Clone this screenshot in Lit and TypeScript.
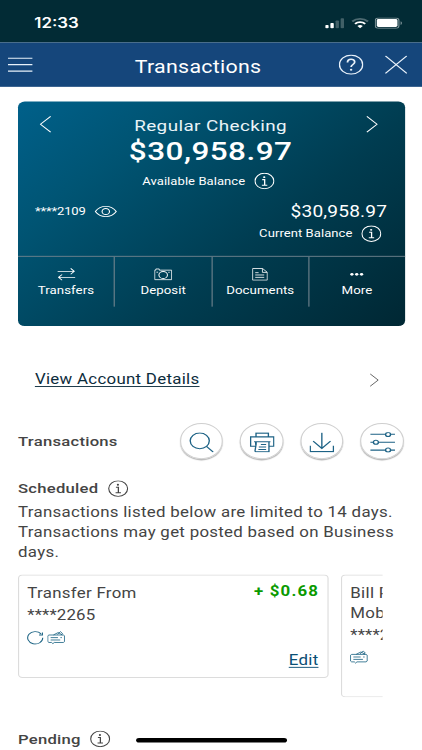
import { LitElement, html, css, svg } from "lit";
import { customElement, property } from "lit/decorators.js";

const icons: Record<string, unknown> = {
  info: svg`<svg viewBox="0 0 18 18" width="18" height="18"><circle cx="9" cy="9" r="8.4"/><circle cx="8.8" cy="4.8" r="1" fill="currentColor" stroke="none"/><path d="M7 7.5h2.2v5.9M6.7 13.5h4.8" stroke-width="1.15"/></svg>`,
  eye: svg`<svg viewBox="0 0 20 14" width="20" height="14"><path d="M.7 7C5.4-.4 14.6-.4 19.3 7 14.6 14.4 5.4 14.4.7 7z"/><circle cx="10" cy="7" r="3.3"/></svg>`,
  left: svg`<svg viewBox="0 0 11 19" width="11" height="19"><path d="M10 1L1 9.5 10 18"/></svg>`,
  right: svg`<svg viewBox="0 0 11 19" width="11" height="19"><path d="M1 1l9 8.5L1 18"/></svg>`,
  menu: svg`<svg viewBox="0 0 22 18" width="22" height="18"><path d="M0 2h22M0 9h22M0 16h22" stroke-width="1.2"/></svg>`,
  help: svg`<svg viewBox="0 0 22 22" width="22" height="22"><circle cx="11" cy="11" r="10.3" stroke-width="1.2"/><path d="M7.8 8.6C7.8 4 14.2 4 14.2 8.2c0 2.7-3.2 2.6-3.2 5.4" stroke-width="1.6"/><circle cx="11" cy="16.4" r="1.1" fill="currentColor" stroke="none"/></svg>`,
  close: svg`<svg viewBox="0 0 20 20" width="20" height="20"><path d="M.5.5l19 19M19.5.5l-19 19" stroke-width="1.2"/></svg>`,
  transfers: svg`<svg viewBox="0 0 16 14" width="16" height="14"><path d="M0 3.8h15M11.8.6L15 3.8l-3.2 3.1M16 10.3H1M4.2 7.2L1 10.3l3.2 3.2" stroke-width=".9"/></svg>`,
  deposit: svg`<svg viewBox="0 0 16 14" width="16" height="14"><path d="M.5 2.5h1V1.2h3v1.3h11v10.3H.5zM12.5 4.8h1.3M2 4.7h1.5" stroke-width=".8"/><circle cx="8" cy="7.7" r="3.8" stroke-width=".9"/></svg>`,
  documents: svg`<svg viewBox="0 0 14 14" width="14" height="14"><path d="M.5.7h8.8l4.2 4.1v8.5H.5zM9.2.8v4.1h4.2M2.8 5.2h3M2.8 7.7h8M2.8 10.3h8" stroke-width=".8"/></svg>`,
  more: svg`<svg viewBox="0 0 14 14" width="14" height="14"><g fill="currentColor" stroke="none"><circle cx="2.7" cy="7" r="1.45"/><circle cx="7" cy="7" r="1.45"/><circle cx="11.3" cy="7" r="1.45"/></g></svg>`,
  search: svg`<svg viewBox="0 0 22 22" width="22" height="22"><circle cx="9.5" cy="9.3" r="8.5" stroke-width="1.2"/><path d="M15.5 15.3l6 6.2" stroke-width="1.2"/></svg>`,
  print: svg`<svg viewBox="0 0 22 22" width="22" height="22"><path d="M5.5 5V.9h11V5M5 15.2H.7V5h20.6v10.2H17M3.8 10.2h14.5M5.2 10.2v3.4M17 10.2v10.9H5.2l-.6-.8 1-7.500v-2.5M9.8 13.2h4.7M8 16h6.5M7.6 18.7h6.9" stroke-width="1.2"/></svg>`,
  download: svg`<svg viewBox="0 0 22 22" width="22" height="22"><path d="M11 .5v17M3.3 9.5l7.700 8 7.700-8M.7 14.5v6.5h20.600v-6.5" stroke-width="1.2"/></svg>`,
  filter: svg`<svg viewBox="0 0 22 22" width="22" height="22"><path d="M0 2.2h13.5M18.2 2.2H22M0 10.800h2.700M7.400 10.800H22M0 19.300h13.500M18.200 19.300H22" stroke-width="1.2"/><circle cx="15.85" cy="2.400" r="2.2" stroke-width="1.2"/><circle cx="5.05" cy="10.800" r="2.2" stroke-width="1.2"/><circle cx="15.85" cy="19.300" r="2.2" stroke-width="1.2"/></svg>`,
  repeat: svg`<svg viewBox="0 0 15 15" width="15" height="15"><path d="M14 7.5A6.7 6.7 0 1 1 12.5 3.3M13.7 1.8v2.7h-3" stroke-width=".95"/></svg>`,
  check: svg`<svg viewBox="0 0 16 15" width="16" height="15"><path d="M1.5 4.5h12.8l1 .8v6.4l-1 .9H6.2l-1.2 1.3-1.100-1.3H1.5l-1-.9V5.300zM5.500 4.400l4.300-2.600 3.500 2.600M9 3.900l2.800-3.100 1.800 2.300-1.300 1.100M3 7.300h6.500M3 9.900h8.500M11.700 7.300H13" stroke-width=".8"/></svg>`,
};
const icon = (name: string) => icons[name];

const shared = css`
  svg {
    display: block;
    fill: none;
    stroke: currentColor;
    stroke-width: 1;
    flex: none;
  }
`;

@customElement("status-bar")
class StatusBar extends LitElement {
  static styles = [
    shared,
    css`
      :host {
        display: flex;
        height: 45.5px;
        padding: 3.5px 16.7px 0 30.5px;
        box-sizing: border-box;
        align-items: center;
        justify-content: space-between;
        background: #022b35;
        color: #fff;
      }
      .time {
        font: 600 15px Inter, sans-serif;
      }
      .signals {
        display: flex;
        align-items: center;
        gap: 5.5px;
      }
    `,
  ];
  render() {
    return html`<span class="time">12:33</span>
      <div class="signals">
        <svg viewBox="0 0 17 12" width="17" height="12">
          <g fill="#fff" stroke="none">
            <rect x="0" y="8" width="3" height="3.6" rx=".8" />
            <rect x="4.6" y="6" width="3" height="5.6" rx=".8" />
            <rect x="9.2" y="3.3" width="3" height="8.3" rx=".8" opacity=".25" />
            <rect x="13.7" y=".8" width="3" height="10.8" rx=".8" opacity=".25" />
          </g>
        </svg>
        <svg viewBox="0 0 16 12" width="16" height="12">
          <path d="M1 4.3a10 10 0 0 1 14 0" stroke-width="2" opacity=".3" />
          <path d="M3.5 6.8a6.5 6.5 0 0 1 9 0" stroke-width="2" />
          <path d="M5.6 9.2a3.4 3.4 0 0 1 4.8 0L8 11.7z" fill="#fff" stroke="none" />
        </svg>
        <svg viewBox="0 0 25 12" width="25" height="12">
          <rect x=".5" y=".5" width="21" height="11" rx="3" opacity=".5" />
          <rect x="1.8" y="1.7" width="18.4" height="8.6" rx="1.6" fill="#fff" stroke="none" />
          <path d="M23 4v4c1.6-.6 1.6-3.4 0-4z" fill="#fff" stroke="none" opacity=".5" />
        </svg>
      </div>`;
  }
}

@customElement("account-card")
class AccountCard extends LitElement {
  static styles = [
    shared,
    css`
      :host {
        display: flex;
        flex-direction: column;
        width: 343.5px;
        height: 243px;
        border-radius: 6px;
        background: linear-gradient(135deg, #00608a 0%, #005473 25%, #003c50 62%, #002733 100%);
        color: #fff;
      }
      .top {
        display: grid;
        grid-template-columns: 11px 1fr 11px;
        padding: 15.5px 24px 0 18.8px;
        height: 97px;
        box-sizing: border-box;
      }
      .headline {
        display: flex;
        flex-direction: column;
        align-items: center;
        padding-left: 4px;
        margin-top: -0.5px;
      }
      .name {
        font-size: 16.8px;
        line-height: 22px;
        letter-spacing: 0.36px;
        color: #eaf4f8;
      }
      .total {
        font-size: 28px;
        font-weight: 500;
        line-height: 36px;
        letter-spacing: 0.4px;
        margin-top: -0.5px;
      }
      .line {
        display: flex;
        align-items: center;
        gap: 8px;
        font-size: 11.6px;
        letter-spacing: 0.05px;
      }
      .available {
        margin: 5px 4px 0 0;
        line-height: 18px;
      }
      .mid {
        display: flex;
        justify-content: space-between;
        padding: 10.5px 15.5px 0 15px;
        height: 70.5px;
        box-sizing: border-box;
      }
      .mask {
        height: 24px;
        gap: 7.5px;
        letter-spacing: -0.1px;
      }
      .right {
        display: flex;
        flex-direction: column;
        align-items: flex-end;
      }
      .current {
        font-size: 17px;
        line-height: 24px;
        letter-spacing: 0.15px;
      }
      .sub {
        margin: 3.3px 4.8px 0 0;
      }
      .actions {
        display: grid;
        grid-template-columns: repeat(3, 86.3px) 1fr;
        border-top: 1px solid #6f838d;
      }
      .action {
        display: flex;
        flex-direction: column;
        align-items: center;
        gap: 3px;
        height: 54px;
        padding-top: 11.5px;
        box-sizing: border-box;
        font-size: 11.8px;
        line-height: 15px;
        letter-spacing: 0.03px;
        border-right: 1px solid #6f838d;
      }
      .action:last-child {
        border: 0;
      }
    `,
  ];
  render() {
    return html`<div class="top">
        ${icon("left")}
        <div class="headline">
          <div class="name">Regular Checking</div>
          <div class="total">$30,958.97</div>
          <div class="line available">Available Balance ${icon("info")}</div>
        </div>
        ${icon("right")}
      </div>
      <div class="mid">
        <div class="line mask">****2109 ${icon("eye")}</div>
        <div class="right">
          <div class="current">$30,958.97</div>
          <div class="line sub">Current Balance ${icon("info")}</div>
        </div>
      </div>
      <div class="actions">
        ${["Transfers", "Deposit", "Documents", "More"].map(
          (label) => html`<div class="action">${icon(label.toLowerCase())}<span>${label}</span></div>`
        )}
      </div>`;
  }
}

@customElement("scheduled-card")
class ScheduledCard extends LitElement {
  @property({ type: Array }) lines: string[] = [];
  @property({ type: Array }) marks: string[] = [];
  @property() amount = "";
  @property() mask = "";
  static styles = [
    shared,
    css`
      :host {
        display: flex;
        justify-content: space-between;
        flex: none;
        width: 275.5px;
        box-sizing: border-box;
        padding: 9px 7.5px 6.5px 7.3px;
        border: 1px solid #dcdcdc;
        border-radius: 4px;
        color: #444;
        font-size: 15px;
        line-height: 21.6px;
        letter-spacing: 0.25px;
      }
      .mask {
        margin-top: 2.5px;
        letter-spacing: 0.1px;
      }
      .marks {
        display: flex;
        gap: 3px;
        margin-top: 5px;
        color: #1c6484;
      }
      .side {
        display: flex;
        flex-direction: column;
        justify-content: space-between;
        align-items: flex-end;
      }
      .amount {
        font-weight: 700;
        font-size: 15px;
        line-height: 18px;
        letter-spacing: 1px;
        margin: -0.5px -0.5px 0 0;
        color: #0a9a00;
      }
      .edit {
        color: #0b4f75;
        text-decoration: underline;
        text-underline-offset: 2px;
      }
    `,
  ];
  render() {
    return html`<div>
        ${this.lines.map((l) => html`<div>${l}</div>`)}
        <div class="mask">${this.mask}</div>
        <div class="marks">${this.marks.map(icon)}</div>
      </div>
      ${this.amount
        ? html`<div class="side"><span class="amount">${this.amount}</span><span class="edit">Edit</span></div>`
        : ""}`;
  }
}

@customElement("app-root")
class AppRoot extends LitElement {
  static styles = [
    shared,
    css`
      :host {
        display: block;
        width: 422px;
        height: 750px;
        overflow: hidden;
        background: #fff;
      }
      .screen {
        position: relative;
        width: 375px;
        height: 812px;
        transform-origin: 0 0;
        transform: scale(1.12533, 0.92365);
        font-family: Roboto, sans-serif;
        color: #444;
        background: #fff;
      }
      .nav {
        display: grid;
        grid-template-columns: 73px 1fr 85px;
        align-items: center;
        height: 48.7px;
        box-sizing: border-box;
        padding: 0 13.5px 0 7px;
        background: #15467b;
        color: #e8f1fa;
      }
      .title {
        text-align: center;
        font-size: 19px;
        letter-spacing: 0.25px;
        padding-top: 5px;
        margin-right: 4.5px;
        color: #fff;
      }
      .tools {
        display: flex;
        justify-content: flex-end;
        align-items: center;
        gap: 19px;
      }
      .content {
        padding: 15.5px 16px 0;
      }
      .details {
        display: flex;
        justify-content: space-between;
        align-items: center;
        height: 30px;
        margin-top: 43px;
        padding: 0 22px 0 15px;
      }
      .link {
        font-size: 15px;
        letter-spacing: 0.25px;
        color: #0d2c3c;
        text-decoration: underline;
        text-underline-offset: 2px;
      }
      .chevron svg {
        width: 9px;
        height: 15px;
        margin-top: 2px;
      }
      .bar {
        display: flex;
        justify-content: space-between;
        align-items: center;
        margin-top: 32px;
        height: 40px;
      }
      h2 {
        margin: 0;
        font-size: 14.8px;
        font-weight: 500;
        letter-spacing: 0.22px;
        line-height: 20px;
      }
      .buttons {
        display: flex;
        gap: 15px;
      }
      .round {
        display: grid;
        place-items: center;
        width: 38.6px;
        height: 38.6px;
        padding-top: 2px;
        box-sizing: border-box;
        border: 1px solid #cfcfcf;
        border-radius: 50%;
        box-shadow: 0 1.5px 1px #b9b9b9;
        color: #1d6285;
      }
      .heading {
        display: flex;
        align-items: center;
        gap: 8.5px;
        height: 20px;
      }
      .scheduled {
        margin-top: 21.8px;
      }
      p {
        margin: 5.6px -8px 0 0;
        font-size: 15px;
        line-height: 21.3px;
        letter-spacing: 0.25px;
      }
      .strip {
        display: flex;
        align-items: flex-start;
        gap: 11.5px;
        width: 324.3px;
        overflow: hidden;
        margin-top: 13px;
      }
      .first {
        height: 112px;
      }
      .second {
        height: 133px;
        white-space: nowrap;
      }
      .pending {
        margin-top: 35px;
      }
      .home {
        position: absolute;
        left: 121px;
        top: 798.7px;
        width: 133.5px;
        height: 5px;
        border-radius: 3px;
        background: #000;
      }
    `,
  ];
  render() {
    return html`<div class="screen">
      <status-bar></status-bar>
      <div class="nav">
        ${icon("menu")}
        <div class="title">Transactions</div>
        <div class="tools">${icon("help")}${icon("close")}</div>
      </div>
      <div class="content">
        <account-card></account-card>
        <div class="details">
          <span class="link">View Account Details</span>
          <span class="chevron">${icon("right")}</span>
        </div>
        <div class="bar">
          <h2>Transactions</h2>
          <div class="buttons">
            ${["search", "print", "download", "filter"].map((n) => html`<div class="round">${icon(n)}</div>`)}
          </div>
        </div>
        <div class="heading scheduled"><h2>Scheduled</h2>${icon("info")}</div>
        <p>Transactions listed below are limited to 14 days. Transactions may get posted based on Business days.</p>
        <div class="strip">
          <scheduled-card class="first" .lines=${["Transfer From"]} .marks=${["repeat", "check"]} mask="****2265" amount="+ $0.68"></scheduled-card>
          <scheduled-card class="second" .lines=${["Bill Payment", "Mobile"]} .marks=${["check"]} mask="****2265"></scheduled-card>
        </div>
        <div class="heading pending"><h2>Pending</h2>${icon("info")}</div>
      </div>
      <div class="home"></div>
    </div>`;
  }
}
